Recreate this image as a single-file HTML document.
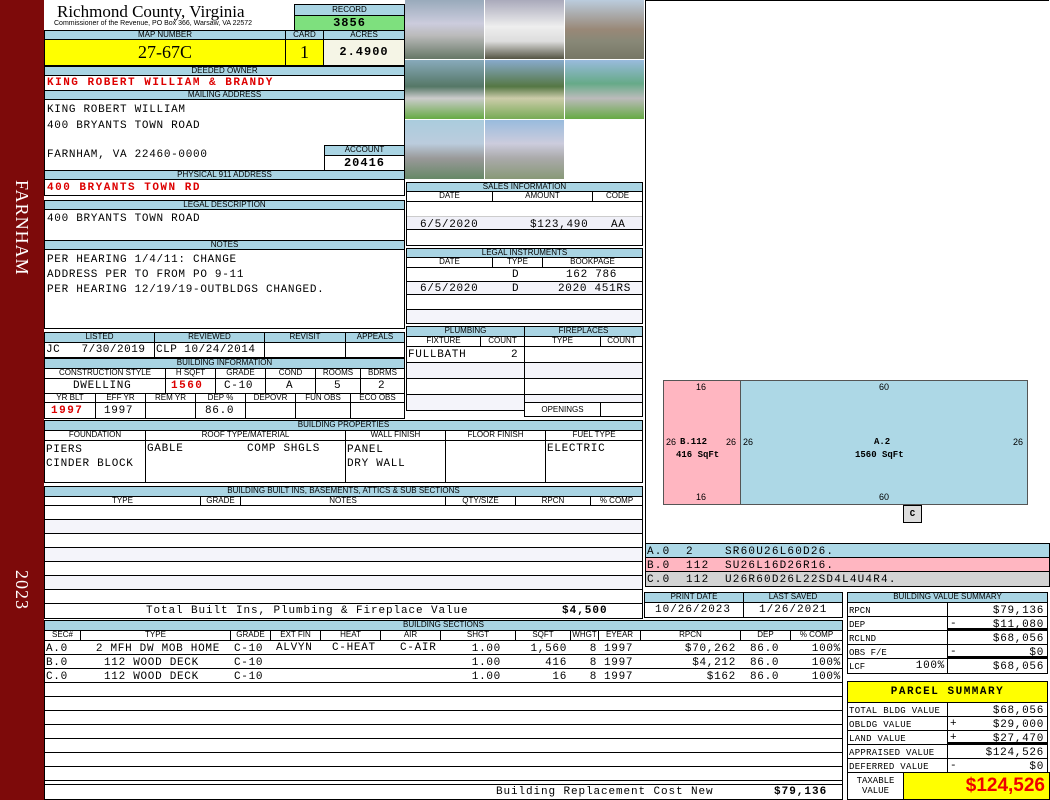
<!DOCTYPE html>
<html><head><meta charset="utf-8"><style>
body{margin:0;width:1050px;height:800px;position:relative;background:#fff;overflow:hidden;font-family:"Liberation Sans",sans-serif}
.a{position:absolute;box-sizing:border-box}
.h{position:absolute;box-sizing:border-box;background:#a9d4e3;border:1px solid #000;font-size:8px;text-align:center;line-height:8px;overflow:hidden;white-space:nowrap}
.c{position:absolute;box-sizing:border-box;border:1px solid #000;background:#fff}
.m{position:absolute;font-family:"Liberation Mono",monospace;font-size:11px;white-space:pre;line-height:12px;letter-spacing:0.7px}
.r{color:#d00;font-weight:bold;letter-spacing:1.5px}
.ph{position:absolute;box-sizing:border-box;width:79px;height:59px}
.s{position:absolute;font:9px "Liberation Sans",sans-serif}
.sm{position:absolute;font:bold 9px "Liberation Mono",monospace;white-space:pre}
.rr{text-align:right}
</style></head><body>
<div class="a" style="left:0;top:0;width:44px;height:800px;background:#7d0a0a"></div>
<div class="a" style="left:11px;top:180px;color:#fff;font:18px 'Liberation Serif',serif;writing-mode:vertical-rl;letter-spacing:1px">FARNHAM</div>
<div class="a" style="left:11px;top:570px;color:#fff;font:18px 'Liberation Serif',serif;writing-mode:vertical-rl;letter-spacing:1px">2023</div>

<div class="a" style="left:57px;top:2px;font:17px 'Liberation Serif',serif">Richmond County, Virginia</div>
<div class="a" style="left:54px;top:20px;font-size:7px">Commissioner of the Revenue, PO Box 366, Warsaw, VA 22572</div>
<div class="h" style="left:294px;top:4px;width:111px;height:12px;line-height:10px">RECORD</div>
<div class="a" style="left:294px;top:15px;width:111px;height:16px;background:#7ee07e;border:1px solid #000;text-align:center;font:bold 12px 'Liberation Mono',monospace;line-height:14px;letter-spacing:1px">3856</div>

<div class="h" style="left:44px;top:30px;width:242px;height:10px">MAP NUMBER</div>
<div class="h" style="left:285px;top:30px;width:39px;height:10px">CARD</div>
<div class="h" style="left:323px;top:30px;width:82px;height:10px">ACRES</div>
<div class="a" style="left:44px;top:39px;width:242px;height:27px;background:#ff0;border:1px solid #000;text-align:center;font:18px 'Liberation Serif',serif;line-height:25px">27-67C</div>
<div class="a" style="left:285px;top:39px;width:39px;height:27px;background:#ff0;border:1px solid #000;text-align:center;font:18px 'Liberation Serif',serif;line-height:25px">1</div>
<div class="a" style="left:323px;top:39px;width:82px;height:27px;background:#f5f5e6;border:1px solid #000;text-align:center;font:bold 12px 'Liberation Mono',monospace;line-height:25px;letter-spacing:1px">2.4900</div>

<div class="h" style="left:44px;top:66px;width:361px;height:10px">DEEDED OWNER</div>
<div class="c" style="left:44px;top:75px;width:361px;height:16px"></div>
<div class="m r" style="left:47px;top:77px">KING ROBERT WILLIAM &amp; BRANDY</div>
<div class="h" style="left:44px;top:90px;width:361px;height:10px">MAILING ADDRESS</div>
<div class="c" style="left:44px;top:99px;width:361px;height:72px"></div>
<div class="m" style="left:47px;top:102px;line-height:16px">KING ROBERT WILLIAM
400 BRYANTS TOWN ROAD</div>
<div class="m" style="left:47px;top:149px">FARNHAM, VA 22460-0000</div>
<div class="h" style="left:324px;top:145px;width:81px;height:11px">ACCOUNT</div>
<div class="c" style="left:324px;top:155px;width:81px;height:16px;text-align:center;font:bold 12px 'Liberation Mono',monospace;line-height:14px;letter-spacing:1px">20416</div>
<div class="h" style="left:44px;top:170px;width:361px;height:10px">PHYSICAL 911 ADDRESS</div>
<div class="c" style="left:44px;top:179px;width:361px;height:17px"></div>
<div class="m r" style="left:47px;top:182px">400 BRYANTS TOWN RD</div>

<div class="h" style="left:44px;top:200px;width:361px;height:10px">LEGAL DESCRIPTION</div>
<div class="c" style="left:44px;top:209px;width:361px;height:32px"></div>
<div class="m" style="left:47px;top:213px">400 BRYANTS TOWN ROAD</div>
<div class="h" style="left:44px;top:240px;width:361px;height:10px">NOTES</div>
<div class="c" style="left:44px;top:249px;width:361px;height:80px"></div>
<div class="m" style="left:47px;top:253px;line-height:15px">PER HEARING 1/4/11: CHANGE
ADDRESS PER TO FROM PO 9-11
PER HEARING 12/19/19-OUTBLDGS CHANGED.</div>

<div class="h" style="left:44px;top:332px;width:111px;height:11px">LISTED</div>
<div class="h" style="left:154px;top:332px;width:111px;height:11px">REVIEWED</div>
<div class="h" style="left:264px;top:332px;width:82px;height:11px">REVISIT</div>
<div class="h" style="left:345px;top:332px;width:60px;height:11px">APPEALS</div>
<div class="c" style="left:44px;top:342px;width:111px;height:16px"></div>
<div class="c" style="left:154px;top:342px;width:111px;height:16px"></div>
<div class="c" style="left:264px;top:342px;width:82px;height:16px"></div>
<div class="c" style="left:345px;top:342px;width:60px;height:16px"></div>
<div class="m" style="left:46px;top:344px;letter-spacing:0.5px">JC   7/30/2019</div>
<div class="m" style="left:156px;top:344px;letter-spacing:0.5px">CLP 10/24/2014</div>

<div class="h" style="left:44px;top:358px;width:361px;height:11px">BUILDING INFORMATION</div>
<div class="h" style="left:44px;top:368px;width:122px;height:11px;background:#fff">CONSTRUCTION STYLE</div>
<div class="h" style="left:165px;top:368px;width:51px;height:11px;background:#fff">H SQFT</div>
<div class="h" style="left:215px;top:368px;width:51px;height:11px;background:#fff">GRADE</div>
<div class="h" style="left:265px;top:368px;width:51px;height:11px;background:#fff">COND</div>
<div class="h" style="left:315px;top:368px;width:46px;height:11px;background:#fff">ROOMS</div>
<div class="h" style="left:360px;top:368px;width:45px;height:11px;background:#fff">BDRMS</div>
<div class="c" style="left:44px;top:378px;width:122px;height:16px"></div>
<div class="c" style="left:165px;top:378px;width:51px;height:16px"></div>
<div class="c" style="left:215px;top:378px;width:51px;height:16px"></div>
<div class="c" style="left:265px;top:378px;width:51px;height:16px"></div>
<div class="c" style="left:315px;top:378px;width:46px;height:16px"></div>
<div class="c" style="left:360px;top:378px;width:45px;height:16px"></div>
<div class="m" style="left:73px;top:380px">DWELLING</div>
<div class="m r" style="left:171px;top:380px">1560</div>
<div class="m" style="left:224px;top:380px">C-10</div>
<div class="m" style="left:286px;top:380px">A</div>
<div class="m" style="left:334px;top:380px">5</div>
<div class="m" style="left:378px;top:380px">2</div>
<div class="h" style="left:44px;top:393px;width:52px;height:10px;background:#fff">YR BLT</div>
<div class="h" style="left:95px;top:393px;width:51px;height:10px;background:#fff">EFF YR</div>
<div class="h" style="left:145px;top:393px;width:51px;height:10px;background:#fff">REM YR</div>
<div class="h" style="left:195px;top:393px;width:51px;height:10px;background:#fff">DEP %</div>
<div class="h" style="left:245px;top:393px;width:51px;height:10px;background:#fff">DEPOVR</div>
<div class="h" style="left:295px;top:393px;width:56px;height:10px;background:#fff">FUN OBS</div>
<div class="h" style="left:350px;top:393px;width:55px;height:10px;background:#fff">ECO OBS</div>
<div class="c" style="left:44px;top:402px;width:52px;height:17px"></div>
<div class="c" style="left:95px;top:402px;width:51px;height:17px"></div>
<div class="c" style="left:145px;top:402px;width:51px;height:17px"></div>
<div class="c" style="left:195px;top:402px;width:51px;height:17px"></div>
<div class="c" style="left:245px;top:402px;width:51px;height:17px"></div>
<div class="c" style="left:295px;top:402px;width:56px;height:17px"></div>
<div class="c" style="left:350px;top:402px;width:55px;height:17px"></div>
<div class="m r" style="left:51px;top:405px">1997</div>
<div class="m" style="left:104px;top:405px">1997</div>
<div class="m" style="left:205px;top:405px">86.0</div>

<div class="ph" style="left:405px;top:0;background:linear-gradient(#9ab 0,#ccd 40%,#bbb 60%,#676 100%)"></div>
<div class="ph" style="left:485px;top:0;background:linear-gradient(#aab 0,#eee 45%,#ddd 70%,#554 100%)"></div>
<div class="ph" style="left:565px;top:0;background:linear-gradient(#bcd 0,#987 50%,#887 70%,#776 100%)"></div>
<div class="ph" style="left:405px;top:60px;background:linear-gradient(#8ab 0,#576 45%,#ccc 65%,#6a4 100%)"></div>
<div class="ph" style="left:485px;top:60px;background:linear-gradient(#8ac 0,#574 45%,#cca 65%,#7a5 100%)"></div>
<div class="ph" style="left:565px;top:60px;background:linear-gradient(#9bd 0,#6a8 40%,#bbb 65%,#6a4 100%)"></div>
<div class="ph" style="left:405px;top:120px;background:linear-gradient(#acd 0,#bcd 40%,#999 65%,#686 100%)"></div>
<div class="ph" style="left:485px;top:120px;background:linear-gradient(#9bd 0,#ccd 40%,#aaa 65%,#897 100%)"></div>

<div class="h" style="left:406px;top:182px;width:237px;height:10px">SALES INFORMATION</div>
<div class="h" style="left:406px;top:191px;width:87px;height:11px;background:#fff">DATE</div>
<div class="h" style="left:492px;top:191px;width:101px;height:11px;background:#fff">AMOUNT</div>
<div class="h" style="left:592px;top:191px;width:51px;height:11px;background:#fff">CODE</div>
<div class="c" style="left:406px;top:201px;width:237px;height:45px"></div>
<div class="a" style="left:407px;top:216px;width:235px;height:14px;background:#f0f0f8;border-bottom:1px solid #000;border-top:1px solid #ccc"></div>
<div class="m" style="left:420px;top:219px">6/5/2020</div>
<div class="m" style="left:530px;top:219px">$123,490</div>
<div class="m" style="left:611px;top:219px">AA</div>
<div class="h" style="left:406px;top:248px;width:237px;height:10px">LEGAL INSTRUMENTS</div>
<div class="h" style="left:406px;top:257px;width:87px;height:11px;background:#fff">DATE</div>
<div class="h" style="left:492px;top:257px;width:51px;height:11px;background:#fff">TYPE</div>
<div class="h" style="left:542px;top:257px;width:101px;height:11px;background:#fff">BOOKPAGE</div>
<div class="c" style="left:406px;top:267px;width:237px;height:57px"></div>
<div class="a" style="left:407px;top:281px;width:235px;height:14px;background:#f4f4fa;border-top:1px solid #000;border-bottom:1px solid #000"></div>
<div class="a" style="left:407px;top:309px;width:235px;height:14px;background:#f4f4fa;border-top:1px solid #000"></div>
<div class="m" style="left:512px;top:269px">D</div>
<div class="m" style="left:566px;top:269px">162 786</div>
<div class="m" style="left:420px;top:283px">6/5/2020</div>
<div class="m" style="left:512px;top:283px">D</div>
<div class="m" style="left:558px;top:283px">2020 451RS</div>

<div class="h" style="left:406px;top:326px;width:119px;height:11px">PLUMBING</div>
<div class="h" style="left:524px;top:326px;width:119px;height:11px">FIREPLACES</div>
<div class="h" style="left:406px;top:336px;width:75px;height:11px;background:#fff">FIXTURE</div>
<div class="h" style="left:480px;top:336px;width:45px;height:11px;background:#fff">COUNT</div>
<div class="h" style="left:524px;top:336px;width:77px;height:11px;background:#fff">TYPE</div>
<div class="h" style="left:600px;top:336px;width:43px;height:11px;background:#fff">COUNT</div>
<div class="c" style="left:406px;top:346px;width:119px;height:17px"></div>
<div class="c" style="left:406px;top:362px;width:119px;height:17px;background:#f4f4fa"></div>
<div class="c" style="left:406px;top:378px;width:119px;height:17px"></div>
<div class="c" style="left:406px;top:394px;width:119px;height:17px;background:#f4f4fa"></div>
<div class="c" style="left:524px;top:346px;width:119px;height:17px"></div>
<div class="c" style="left:524px;top:362px;width:119px;height:17px;background:#f4f4fa"></div>
<div class="c" style="left:524px;top:378px;width:119px;height:17px"></div>
<div class="c" style="left:524px;top:394px;width:119px;height:9px;background:#f4f4fa"></div>
<div class="c" style="left:524px;top:402px;width:77px;height:15px;font-size:8px;text-align:center;line-height:13px">OPENINGS</div>
<div class="c" style="left:600px;top:402px;width:43px;height:15px"></div>
<div class="m" style="left:408px;top:349px">FULLBATH</div>
<div class="m" style="left:511px;top:349px">2</div>

<div class="h" style="left:44px;top:420px;width:599px;height:11px">BUILDING PROPERTIES</div>
<div class="h" style="left:44px;top:430px;width:102px;height:11px;background:#fff">FOUNDATION</div>
<div class="h" style="left:145px;top:430px;width:201px;height:11px;background:#fff">ROOF TYPE/MATERIAL</div>
<div class="h" style="left:345px;top:430px;width:101px;height:11px;background:#fff">WALL FINISH</div>
<div class="h" style="left:445px;top:430px;width:101px;height:11px;background:#fff">FLOOR FINISH</div>
<div class="h" style="left:545px;top:430px;width:98px;height:11px;background:#fff">FUEL TYPE</div>
<div class="c" style="left:44px;top:440px;width:102px;height:43px"></div>
<div class="c" style="left:145px;top:440px;width:201px;height:43px"></div>
<div class="c" style="left:345px;top:440px;width:101px;height:43px"></div>
<div class="c" style="left:445px;top:440px;width:101px;height:43px"></div>
<div class="c" style="left:545px;top:440px;width:98px;height:43px"></div>
<div class="m" style="left:46px;top:443px;line-height:14px">PIERS
CINDER BLOCK</div>
<div class="m" style="left:147px;top:443px">GABLE</div>
<div class="m" style="left:247px;top:443px">COMP SHGLS</div>
<div class="m" style="left:347px;top:443px;line-height:14px">PANEL
DRY WALL</div>
<div class="m" style="left:547px;top:443px">ELECTRIC</div>

<div class="h" style="left:44px;top:486px;width:599px;height:11px">BUILDING BUILT INS, BASEMENTS, ATTICS &amp; SUB SECTIONS</div>
<div class="h" style="left:44px;top:496px;width:157px;height:10px;background:#fff">TYPE</div>
<div class="h" style="left:200px;top:496px;width:41px;height:10px;background:#fff">GRADE</div>
<div class="h" style="left:240px;top:496px;width:206px;height:10px;background:#fff">NOTES</div>
<div class="h" style="left:445px;top:496px;width:71px;height:10px;background:#fff">QTY/SIZE</div>
<div class="h" style="left:515px;top:496px;width:76px;height:10px;background:#fff">RPCN</div>
<div class="h" style="left:590px;top:496px;width:53px;height:10px;background:#fff">% COMP</div>
<div class="c" style="left:44px;top:505px;width:599px;height:114px;background:repeating-linear-gradient(#fff 0,#fff 13px,#000 13px,#000 14px,#f4f4fa 14px,#f4f4fa 27px,#000 27px,#000 28px)"></div>
<div class="c" style="left:44px;top:603px;width:599px;height:16px"></div>
<div class="m" style="left:146px;top:605px;letter-spacing:0.9px">Total Built Ins, Plumbing &amp; Fireplace Value</div>
<div class="m" style="left:562px;top:605px;font-weight:bold;letter-spacing:1px">$4,500</div>

<div class="h" style="left:44px;top:620px;width:799px;height:11px">BUILDING SECTIONS</div>
<div class="h" style="left:44px;top:630px;width:37px;height:11px;background:#fff">SEC#</div>
<div class="h" style="left:80px;top:630px;width:151px;height:11px;background:#fff">TYPE</div>
<div class="h" style="left:230px;top:630px;width:41px;height:11px;background:#fff">GRADE</div>
<div class="h" style="left:270px;top:630px;width:51px;height:11px;background:#fff">EXT FIN</div>
<div class="h" style="left:320px;top:630px;width:61px;height:11px;background:#fff">HEAT</div>
<div class="h" style="left:380px;top:630px;width:61px;height:11px;background:#fff">AIR</div>
<div class="h" style="left:440px;top:630px;width:76px;height:11px;background:#fff">SHGT</div>
<div class="h" style="left:515px;top:630px;width:56px;height:11px;background:#fff">SQFT</div>
<div class="h" style="left:570px;top:630px;width:29px;height:11px;background:#fff">WHGT</div>
<div class="h" style="left:598px;top:630px;width:43px;height:11px;background:#fff">EYEAR</div>
<div class="h" style="left:640px;top:630px;width:101px;height:11px;background:#fff">RPCN</div>
<div class="h" style="left:740px;top:630px;width:51px;height:11px;background:#fff">DEP</div>
<div class="h" style="left:790px;top:630px;width:53px;height:11px;background:#fff">% COMP</div>
<div class="c" style="left:44px;top:640px;width:799px;height:145px;background:repeating-linear-gradient(#fff 0,#fff 13px,#000 13px,#000 14px)"></div>
<div class="m" style="left:46px;top:642px;line-height:14px">A.0
B.0
C.0</div>
<div class="m rr" style="left:60px;top:642px;width:160px;line-height:14px">2 MFH DW MOB HOME</div>
<div class="m" style="left:104px;top:656px;line-height:14px">112 WOOD DECK
112 WOOD DECK</div>
<div class="m" style="left:234px;top:642px;line-height:14px">C-10
C-10
C-10</div>
<div class="m" style="left:276px;top:642px">ALVYN</div>
<div class="m" style="left:332px;top:642px">C-HEAT</div>
<div class="m" style="left:400px;top:642px">C-AIR</div>
<div class="m rr" style="left:440px;top:642px;width:61px;line-height:14px">1.00
1.00
1.00</div>
<div class="m rr" style="left:500px;top:642px;width:67px;line-height:14px">1,560
416
16</div>
<div class="m rr" style="left:570px;top:642px;width:27px;line-height:14px">8
8
8</div>
<div class="m" style="left:604px;top:642px;line-height:14px">1997
1997
1997</div>
<div class="m rr" style="left:650px;top:642px;width:86px;line-height:14px">$70,262
$4,212
$162</div>
<div class="m" style="left:750px;top:642px;line-height:14px">86.0
86.0
86.0</div>
<div class="m rr" style="left:790px;top:642px;width:51px;line-height:14px">100%
100%
100%</div>
<div class="c" style="left:44px;top:784px;width:799px;height:16px"></div>
<div class="m" style="left:496px;top:786px;letter-spacing:0.9px">Building Replacement Cost New</div>
<div class="m" style="left:774px;top:786px;font-weight:bold;letter-spacing:1px">$79,136</div>

<div class="c" style="left:645px;top:0;width:404px;height:544px;border-right:none"></div>
<div class="a" style="left:663px;top:380px;width:78px;height:125px;background:#ffb6c1;border:1px solid #555"></div>
<div class="a" style="left:740px;top:380px;width:288px;height:125px;background:#add8e6;border:1px solid #555"></div>
<div class="s" style="left:696px;top:382px">16</div>
<div class="s" style="left:879px;top:382px">60</div>
<div class="s" style="left:696px;top:492px">16</div>
<div class="s" style="left:879px;top:492px">60</div>
<div class="s" style="left:666px;top:437px">26</div>
<div class="sm" style="left:680px;top:437px">B.112</div>
<div class="s" style="left:726px;top:437px">26</div>
<div class="s" style="left:743px;top:437px">26</div>
<div class="s" style="left:1013px;top:437px">26</div>
<div class="sm" style="left:676px;top:450px">416 SqFt</div>
<div class="sm" style="left:874px;top:437px">A.2</div>
<div class="sm" style="left:855px;top:450px">1560 SqFt</div>
<div class="a" style="left:903px;top:505px;width:19px;height:18px;background:#ddd;border:1px solid #000;font:bold 9px 'Liberation Mono';text-align:center;line-height:16px">C</div>
<div class="a" style="left:645px;top:543px;width:405px;height:15px;background:#add8e6;border:1px solid #000"></div>
<div class="a" style="left:645px;top:557px;width:405px;height:15px;background:#ffb6c1;border:1px solid #000"></div>
<div class="a" style="left:645px;top:571px;width:405px;height:16px;background:#d3d3d3;border:1px solid #000"></div>
<div class="m" style="left:647px;top:545px;line-height:14px;letter-spacing:1.2px">A.0  2    SR60U26L60D26.
B.0  112  SU26L16D26R16.
C.0  112  U26R60D26L22SD4L4U4R4.</div>

<div class="h" style="left:644px;top:592px;width:100px;height:11px">PRINT DATE</div>
<div class="h" style="left:743px;top:592px;width:100px;height:11px">LAST SAVED</div>
<div class="c" style="left:644px;top:602px;width:100px;height:16px"></div>
<div class="c" style="left:743px;top:602px;width:100px;height:16px"></div>
<div class="m" style="left:655px;top:604px;letter-spacing:1px">10/26/2023</div>
<div class="m" style="left:759px;top:604px;letter-spacing:1px">1/26/2021</div>

<div class="h" style="left:847px;top:592px;width:201px;height:11px">BUILDING VALUE SUMMARY</div>
<div class="c" style="left:847px;top:602px;width:101px;height:15px"></div><div class="c" style="left:947px;top:602px;width:101px;height:15px"></div>
<div class="c" style="left:847px;top:616px;width:101px;height:15px"></div><div class="c" style="left:947px;top:616px;width:101px;height:15px;border-bottom:3px solid #000"></div>
<div class="c" style="left:847px;top:630px;width:101px;height:15px"></div><div class="c" style="left:947px;top:630px;width:101px;height:15px"></div>
<div class="c" style="left:847px;top:644px;width:101px;height:15px"></div><div class="c" style="left:947px;top:644px;width:101px;height:15px;border-bottom:3px solid #000"></div>
<div class="c" style="left:847px;top:658px;width:101px;height:16px"></div><div class="c" style="left:947px;top:658px;width:101px;height:16px"></div>
<div class="m" style="left:849px;top:604px;font-size:9px;line-height:14px;letter-spacing:0">RPCN
DEP
RCLND
OBS F/E
LCF</div>
<div class="m rr" style="left:880px;top:660px;width:65px">100%</div>
<div class="m rr" style="left:950px;top:604px;line-height:14px;width:94px">$79,136
$11,080
$68,056
$0
$68,056</div>
<div class="m" style="left:950px;top:618px">-</div>
<div class="m" style="left:950px;top:646px">-</div>

<div class="a" style="left:847px;top:681px;width:201px;height:22px;background:#ff0;border:1px solid #000;text-align:center;font:bold 11px 'Liberation Mono',monospace;line-height:20px;letter-spacing:1.5px">PARCEL SUMMARY</div>
<div class="c" style="left:847px;top:702px;width:101px;height:15px"></div><div class="c" style="left:947px;top:702px;width:101px;height:15px"></div>
<div class="c" style="left:847px;top:716px;width:101px;height:15px"></div><div class="c" style="left:947px;top:716px;width:101px;height:15px"></div>
<div class="c" style="left:847px;top:730px;width:101px;height:15px"></div><div class="c" style="left:947px;top:730px;width:101px;height:15px;border-bottom:3px solid #000"></div>
<div class="c" style="left:847px;top:744px;width:101px;height:15px"></div><div class="c" style="left:947px;top:744px;width:101px;height:15px"></div>
<div class="c" style="left:847px;top:758px;width:101px;height:15px"></div><div class="c" style="left:947px;top:758px;width:101px;height:15px"></div>
<div class="m" style="left:849px;top:704px;font-size:9px;line-height:14px;letter-spacing:0.3px">TOTAL BLDG VALUE
OBLDG VALUE
LAND VALUE
APPRAISED VALUE
DEFERRED VALUE</div>
<div class="m rr" style="left:950px;top:704px;line-height:14px;width:94px">$68,056
$29,000
$27,470
$124,526
$0</div>
<div class="m" style="left:950px;top:718px">+</div>
<div class="m" style="left:950px;top:732px">+</div>
<div class="m" style="left:950px;top:760px">-</div>
<div class="c" style="left:847px;top:772px;width:57px;height:28px;font:9px 'Liberation Mono',monospace;text-align:center;line-height:10px;padding-top:3px">TAXABLE<br>VALUE</div>
<div class="a" style="left:903px;top:772px;width:147px;height:28px;background:#ff0;border:1px solid #000;text-align:right;padding-right:4px;color:#e00;font:bold 19px 'Liberation Sans',sans-serif;line-height:26px">$124,526</div>
</body></html>
